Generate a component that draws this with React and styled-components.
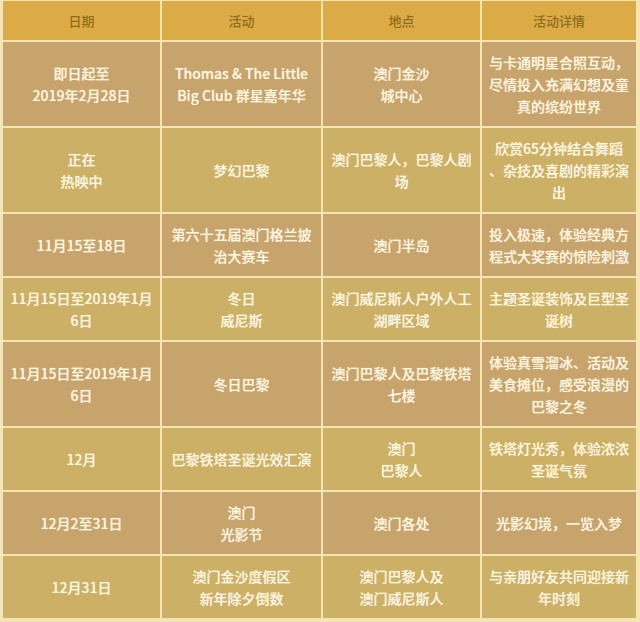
import React from "react";
import styled, { createGlobalStyle } from "styled-components";

const GlobalStyle = createGlobalStyle`
  html, body {
    margin: 0;
    padding: 0;
    background: #f7ebc6;
  }
  body {
    font-family: "Noto Sans CJK SC", "Noto Sans", sans-serif;
  }
`;

const Table = styled.div`
  display: flex;
  flex-direction: column;
  gap: 2px;
  width: 640px;
  box-sizing: border-box;
  padding: 1px 4px 4px 3px;
  background: #f6e5b4;
`;

const Row = styled.div`
  display: grid;
  grid-template-columns: 157px 159px 157px 1fr;
  gap: 2px;
`;

const Cell = styled.div`
  display: flex;
  flex-direction: column;
  align-items: center;
  justify-content: center;
  padding: ${(p) => (p.$head ? "8px 2px" : "9px 2px")};
  min-height: ${(p) => (p.$head ? "23px" : "auto")};
  background: ${(p) =>
    p.$head ? "#dcab45" : p.$tone === "brown" ? "#c7a46c" : "#cbb066"};
  color: ${(p) => (p.$head ? "#8f6c1d" : "#fff7e2")};
  font-size: ${(p) => (p.$head ? "13px" : "14px")};
  font-weight: 500;
  line-height: 22px;
  text-align: center;
  text-shadow: ${(p) => (p.$head ? "none" : "0 0 1px rgba(255,248,225,0.5)")};
`;

const Line = styled.span`
  display: block;
  white-space: nowrap;
`;

const headers = ["日期", "活动", "地点", "活动详情"];

const rows = [
  [
    ["即日起至", "2019年2月28日"],
    ["Thomas & The Little", "Big Club 群星嘉年华"],
    ["澳门金沙", "城中心"],
    ["与卡通明星合照互动，", "尽情投入充满幻想及童", "真的缤纷世界"],
  ],
  [
    ["正在", "热映中"],
    ["梦幻巴黎"],
    ["澳门巴黎人，巴黎人剧", "场"],
    ["欣赏65分钟结合舞蹈", "、杂技及喜剧的精彩演", "出"],
  ],
  [
    ["11月15至18日"],
    ["第六十五届澳门格兰披", "治大赛车"],
    ["澳门半岛"],
    ["投入极速，体验经典方", "程式大奖赛的惊险刺激"],
  ],
  [
    ["11月15日至2019年1月", "6日"],
    ["冬日", "威尼斯"],
    ["澳门威尼斯人户外人工", "湖畔区域"],
    ["主题圣诞装饰及巨型圣", "诞树"],
  ],
  [
    ["11月15日至2019年1月", "6日"],
    ["冬日巴黎"],
    ["澳门巴黎人及巴黎铁塔", "七楼"],
    ["体验真雪溜冰、活动及", "美食摊位，感受浪漫的", "巴黎之冬"],
  ],
  [
    ["12月"],
    ["巴黎铁塔圣诞光效汇演"],
    ["澳门", "巴黎人"],
    ["铁塔灯光秀，体验浓浓", "圣诞气氛"],
  ],
  [
    ["12月2至31日"],
    ["澳门", "光影节"],
    ["澳门各处"],
    ["光影幻境，一览入梦"],
  ],
  [
    ["12月31日"],
    ["澳门金沙度假区", "新年除夕倒数"],
    ["澳门巴黎人及", "澳门威尼斯人"],
    ["与亲朋好友共同迎接新", "年时刻"],
  ],
];

export default function App() {
  return (
    <>
      <GlobalStyle />
      <Table>
        <Row>
          {headers.map((h) => (
            <Cell key={h} $head>
              <Line>{h}</Line>
            </Cell>
          ))}
        </Row>
        {rows.map((r, i) => (
          <Row key={i}>
            {r.map((lines, j) => (
              <Cell key={j} $tone={i % 2 === 0 ? "brown" : "gold"}>
                {lines.map((t, k) => (
                  <Line key={k}>{t}</Line>
                ))}
              </Cell>
            ))}
          </Row>
        ))}
      </Table>
    </>
  );
}
